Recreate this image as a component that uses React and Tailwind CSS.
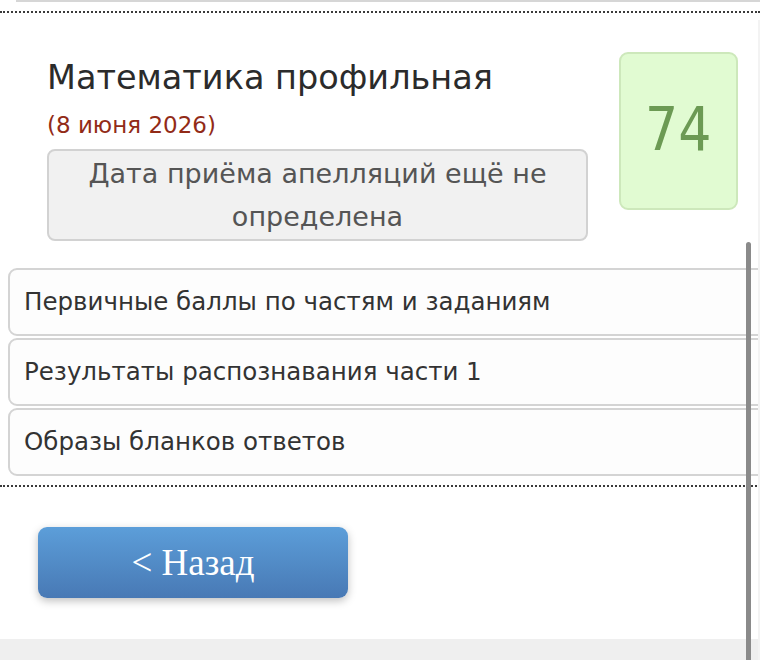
import React from "react";

export default function App() {
  const rows = [
    "Первичные баллы по частям и заданиям",
    "Результаты распознавания части 1",
    "Образы бланков ответов",
  ];
  return (
    <div
      className="relative h-[660px] w-[760px] overflow-hidden bg-white"
      style={{ fontFamily: '"DejaVu Sans", Verdana, sans-serif' }}
    >
      <div className="ml-[16px] h-[2px] bg-[#d6d6d6]" />
      <div className="mt-[9px] border-t-2 border-dotted border-[#3a3a3a]" />

      <div className="flex pl-[47px] pr-[22px] pt-[39px]">
        <div className="flex w-[541px] flex-col">
          <div className="mt-[8px] whitespace-nowrap text-[33.5px] leading-[36px] text-[#2b2b2b]">
            Математика профильная
          </div>
          <div className="mt-[16px] text-[23px] leading-[26px] text-[#922b17]">
            (8 июня 2026)
          </div>
          <div className="mt-[11px] flex h-[92px] flex-col items-center justify-center rounded-[8px] border-2 border-[#d2d2d2] bg-[#f1f1f1] text-center text-[27px] leading-[43px] text-[#555]">
            <span className="whitespace-nowrap">Дата приёма апелляций ещё не</span>
            <span>определена</span>
          </div>
        </div>
        <div className="ml-auto flex h-[158px] w-[119px] items-center justify-center rounded-[9px] border-2 border-[#cde8bb] bg-[#e1fbd2] pb-[4px] text-[#6c9a54]">
          <span className="inline-block scale-x-[0.87] text-[60px] leading-none">74</span>
        </div>
      </div>

      <div className="mr-[-12px] ml-[8px] mt-[27px] flex flex-col gap-[2px]">
        {rows.map((r) => (
          <div
            key={r}
            className="flex h-[68px] items-center whitespace-nowrap rounded-[9px] border-2 border-[#d4d4d4] bg-[#fdfdfd] pl-[14px] text-[24.5px] text-[#333]"
          >
            {r}
          </div>
        ))}
      </div>

      <div className="mt-[9px] border-t-2 border-dotted border-[#3a3a3a]" />

      <div
        className="ml-[38px] mt-[40px] flex h-[71px] w-[310px] items-center justify-center rounded-[9px] bg-gradient-to-b from-[#5c9ed9] to-[#4879b5] text-[37px] text-white shadow-[0_3px_8px_rgba(0,0,0,0.25)]"
        style={{ fontFamily: '"Liberation Serif", "Times New Roman", serif' }}
      >
        &lt; Назад
      </div>

      <div className="absolute bottom-0 left-0 right-0 h-[21px] bg-[#efefef]" />
      <div className="absolute right-[9px] top-[242px] h-[430px] w-[5px] rounded-t-full bg-[#8a8a8a]" />
      <div className="absolute right-0 top-[20px] bottom-0 w-[2px] bg-[#f3f3f3]" />
    </div>
  );
}
